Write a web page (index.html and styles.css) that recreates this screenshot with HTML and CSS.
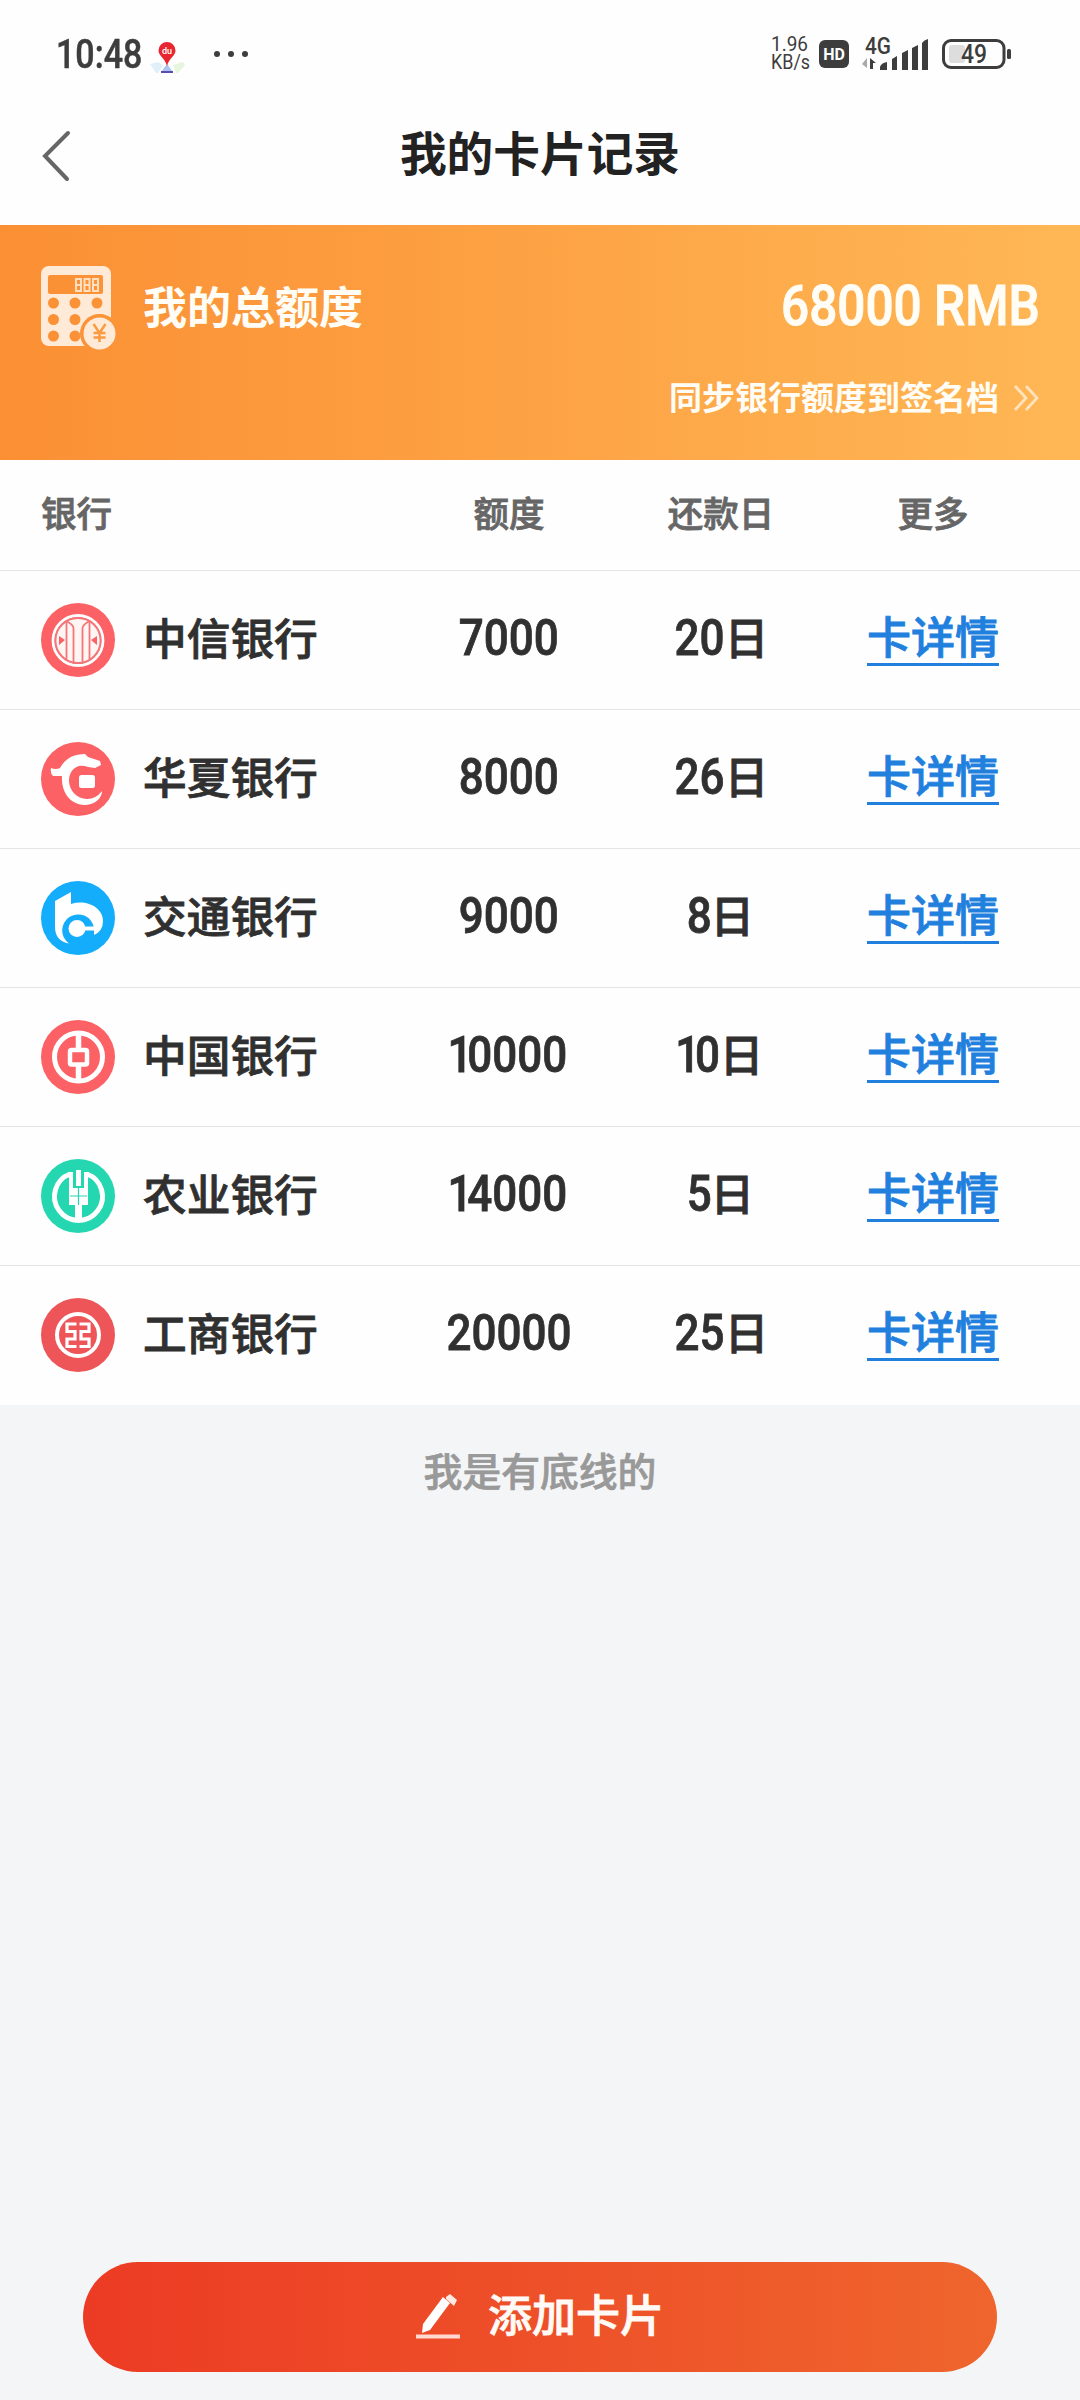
FILE: index.html
```html
<!DOCTYPE html>
<html lang="zh-CN">
<head>
<meta charset="utf-8">
<title>我的卡片记录</title>
<link rel="stylesheet" href="styles.css">
</head>
<body>
<div class="screen">
  <div class="status">
    <span class="clock"><span>10:48</span></span>
    <svg class="pin" width="38" height="40" viewBox="0 0 38 40">
      <path d="M2 28l8-2 5 3-5 8H8z" fill="#dff0fb"/><path d="M25 29l10-3 2 3-7 8h-2z" fill="#e6f5dd"/>
      <path d="M19 28l6 8H13z" fill="#a9c6ee"/><path d="M13 35h12v2H13z" fill="#5a4bb0"/>
      <path d="M19 30C17 22 10.500 20 10.500 14.500a8.500 8.500 0 0 1 17 0C27.500 20 21 22 19 30z" fill="#e8262f"/>
      <text x="19" y="18" text-anchor="middle" class="pin-text">du</text>
    </svg>
    <span class="dots"><i></i><i></i><i></i></span>
    <svg class="speed" width="42" height="40" viewBox="0 0 42 40">
      <text x="1" y="17" textLength="37" lengthAdjust="spacingAndGlyphs">1.96</text>
      <text x="1" y="35" textLength="39" lengthAdjust="spacingAndGlyphs">KB/s</text>
    </svg>
    <span class="hd">HD</span>
    <svg class="signal" width="68" height="40" viewBox="0 0 68 40">
      <text x="4" y="20" class="sig-text" textLength="26" lengthAdjust="spacingAndGlyphs">4G</text>
      <path d="M6 24v10L1 30" fill="#aaa"/><path d="M9 35V24l6 5h-3v6z" fill="#3d3d3d"/>
      <path d="M19 36v-3q1-4 7-5v8zM31 36V25l5-3v14zM41 36V19l6-3v20zM51 36V14l6-3v25zM61 36V9q2-3 6-4v31z" fill="#3d3d3d"/>
    </svg>
    <svg class="battery" width="70" height="32" viewBox="0 0 70 32">
      <rect x="7" y="7" width="16" height="18" rx="3" fill="#ddd"/>
      <rect x="1.500" y="2.500" width="60.500" height="27" rx="7.500" fill="none" stroke="#3d3d3d" stroke-width="3"/>
      <rect x="65" y="11" width="4" height="10" rx="1.500" fill="#3d3d3d"/>
      <text x="19" y="24.500" class="bat-text" textLength="26" lengthAdjust="spacingAndGlyphs">49</text>
    </svg>
  </div>

  <header class="nav">
    <svg class="back" width="30" height="52" viewBox="0 0 30 52"><path d="M27 3L4 26l22 23" fill="none" stroke="#666" stroke-width="4" stroke-linecap="round"/></svg>
    <h1>我的卡片记录</h1>
  </header>

  <section class="total">
    <div class="total-main">
      <svg class="calc" width="75" height="86" viewBox="0 0 75 86">
        <defs><mask id="cut"><rect width="75" height="86" fill="#fff"/><rect x="7" y="9" width="55" height="19" rx="2" fill="#000"/><circle cx="12.500" cy="37" r="5.500" fill="#000"/><circle cx="34" cy="37" r="5.500" fill="#000"/><circle cx="56" cy="37" r="5.500" fill="#000"/><circle cx="12.500" cy="53.500" r="5.500" fill="#000"/><circle cx="34" cy="53.500" r="5.500" fill="#000"/><circle cx="12.500" cy="70" r="5.500" fill="#000"/><circle cx="34" cy="70" r="5.500" fill="#000"/><circle cx="58.500" cy="67.500" r="19.500" fill="#000"/></mask></defs>
        <rect width="70" height="80" rx="8" fill="#ffead8" mask="url(#cut)"/>
        <circle cx="58.500" cy="67.500" r="16" fill="#ffead8"/>
        <path d="M52.500 58l6 9 6-9M58.500 67v9M52.500 67h12M52.500 71.500h12" fill="none" stroke="#fb9a3e" stroke-width="2.400"/>
        <path d="M35 13h5v12h-5zM35 19h5M43.500 13h5v12h-5zM43.500 19h5M52 13h5v12h-5zM52 19h5" fill="none" stroke="#ffdfc0" stroke-width="2"/>
      </svg>
      <span class="total-label">我的总额度</span>
      <span class="total-value"><span>68000 RMB</span></span>
    </div>
    <div class="sync"><span>同步银行额度到签名档</span>
      <svg width="26" height="28" viewBox="0 0 26 28"><path d="M2 2l11 12L2 26M13 2l11 12-11 12" fill="none" stroke="#ffe3bd" stroke-width="2.800"/></svg>
    </div>
  </section>

  <main class="table">
    <div class="row head"><span>银行</span><span>额度</span><span>还款日</span><span>更多</span></div>
    <div class="row">
      <span class="bank"><svg viewBox="0 0 74 74"><circle cx="37" cy="37" r="37" fill="#fc6165"/><circle cx="37" cy="37.500" r="25" fill="none" stroke="#fff" stroke-width="2.800"/><circle cx="37" cy="37.500" r="22.500" fill="#fff5f3"/><path d="M18 33l6 4-6 5zM56 33l-6 4 6 5z" fill="#fc6165"/><g fill="none" stroke="#f3777a" stroke-width="1.800"><circle cx="37" cy="37.500" r="22.500"/><path d="M25.500 18v39M48.500 18v39M32.500 60V25q0-3-7-7M41.500 60V25q0-3 7-7"/></g></svg><span>中信银行</span></span>
      <span class="num"><b>7000</b></span><span class="num"><b>20</b>日</span><span><a>卡详情</a></span>
    </div>
    <div class="row">
      <span class="bank"><svg viewBox="0 0 74 74"><circle cx="37" cy="37" r="37" fill="#fc6165"/><path d="M10 26Q15 28 19 26C24 17 32 12 44 12L47 15 53 17 59 19 60 23 54 26 47 25Q42 23 38 24C31 26 28 32 28 39 28 48 36 57 46 57Q55 57 61 49C61 57 53 63 43 63 29 62 20 50 21 34L12 34Q9 31 10 26z" fill="#fff"/><rect x="38" y="33" width="16" height="13" rx="2.500" fill="#fff"/></svg><span>华夏银行</span></span>
      <span class="num"><b>8000</b></span><span class="num"><b>26</b>日</span><span><a>卡详情</a></span>
    </div>
    <div class="row">
      <span class="bank"><svg viewBox="0 0 74 74"><circle cx="37" cy="37" r="37" fill="#14adfb"/><path d="M14 20L30 11V23C46 18 62 27 62 40Q62 50 53 54V47A16 16 0 1 0 28 62.500Q14 60 14 46z" fill="#fff"/><circle cx="36" cy="47.500" r="8.500" fill="#fff"/><path d="M40 45.500h13v4H40z" fill="#fff"/></svg><span>交通银行</span></span>
      <span class="num"><b>9000</b></span><span class="num"><b>8</b>日</span><span><a>卡详情</a></span>
    </div>
    <div class="row">
      <span class="bank"><svg viewBox="0 0 74 74"><circle cx="37" cy="37" r="37" fill="#fc6165"/><g fill="none" stroke="#fff"><circle cx="37.500" cy="37" r="24" stroke-width="5"/><rect x="29" y="30" width="17" height="14.500" rx="1.500" stroke-width="4.500"/><path d="M37.500 13v17M37.500 45v17" stroke-width="5.500"/></g></svg><span>中国银行</span></span>
      <span class="num"><b><i>1</i>0000</b></span><span class="num"><b><i>1</i>0</b>日</span><span><a>卡详情</a></span>
    </div>
    <div class="row">
      <span class="bank"><svg viewBox="0 0 74 74"><circle cx="37" cy="37" r="37" fill="#25d7b0"/><path d="M29 15a24 24 0 1 0 17 0" fill="none" stroke="#fff" stroke-width="5"/><path d="M28 13h4v16h11V13h4v33h-6v16h-7V46h-6z" fill="#fff"/><path d="M35 11h5v16h-5z" fill="#fff"/><path d="M37.500 29v17M29 37h17" stroke="#25d7b0" stroke-width="1.200"/></svg><span>农业银行</span></span>
      <span class="num"><b><i>1</i>4000</b></span><span class="num"><b>5</b>日</span><span><a>卡详情</a></span>
    </div>
    <div class="row">
      <span class="bank"><svg viewBox="0 0 74 74"><circle cx="37" cy="37" r="37" fill="#ed5559"/><g fill="none" stroke="#fff"><circle cx="37" cy="37" r="21" stroke-width="4"/><path d="M35.500 26H26V33.500H34V41H26V48.500H35.500M38.500 26H48V33.500H40V41H48V48.500H38.500" stroke-width="3.200"/></g></svg><span>工商银行</span></span>
      <span class="num"><b>20000</b></span><span class="num"><b>25</b>日</span><span><a>卡详情</a></span>
    </div>
  </main>

  <p class="end">我是有底线的</p>

  <footer class="foot">
    <button class="add">
      <svg width="44" height="44" viewBox="0 0 44 44"><path d="M6 38l1-9L27 2l7 6-20 27z" fill="#fff"/><path d="M30 2l4-3 7 6-3 6-8-7z" fill="#ffe9e2"/><path d="M0 39.500h44v4H0z" fill="#ffd9cf"/></svg>
      <span>添加卡片</span>
    </button>
  </footer>
</div>
</body>
</html>
```
FILE: styles.css
```css
* { box-sizing: border-box; }
body { margin: 0; font-family: "Noto Sans CJK SC", sans-serif; font-weight: 500; color: #303030; }
.screen { width: 1080px; height: 2400px; display: flex; flex-direction: column; background: #f4f5f7; }

.status { height: 107px; padding: 0 68px 0 56px; display: flex; align-items: center; background: #fefefe; font-family: Roboto, sans-serif; color: #3d3d3d; }
.clock { width: 86px; font-size: 41px; white-space: nowrap; }
.clock span { display: inline-block; transform: scaleX(.83); transform-origin: left; -webkit-text-stroke: .5px; }
.pin { margin-left: 6px; margin-top: 4px; }
.pin-text { font: 500 9px Roboto, sans-serif; fill: #fff; }
.dots { display: flex; gap: 8px; margin-left: 28px; }
.dots i { width: 6px; height: 6px; border-radius: 50%; background: #3d3d3d; }
.speed { margin-left: auto; font: 400 21px Roboto, sans-serif; fill: #3d3d3d; }
.hd { width: 30px; height: 28px; margin-left: 7px; border-radius: 6px; background: #3d3d3d; color: #fff; font: 700 16px/29px Roboto, sans-serif; text-align: center; }
.signal { margin-left: 12px; }
.battery { margin-left: 13px; }
.sig-text { font: 500 23px Roboto, sans-serif; fill: #3d3d3d; }
.bat-text { font: 500 25px Roboto, sans-serif; fill: #3d3d3d; }

.nav { height: 118px; padding: 0 41px; display: grid; grid-template-columns: 30px 1fr 30px; align-items: center; background: #fefefe; }
.back { margin-top: -20px; }
.nav h1 { margin: 0; padding-bottom: 30px; font-size: 46.700px; line-height: 60px; font-weight: 700; color: #222; text-align: center; }

.total { height: 235px; padding: 41px 41px 0; background: linear-gradient(90deg, #fb8f34, #ffb755); color: #fffdf5; }
.total-main { display: flex; align-items: flex-start; height: 86px; }
.total-label { margin-left: 27px; padding-top: 6px; font-size: 44px; line-height: 66px; font-weight: 700; }
.total-value { margin-left: auto; width: 258px; padding-top: 7px; font: 500 55px/66px Roboto, sans-serif; white-space: nowrap; -webkit-text-stroke: 1px; }
.total-value span { display: inline-block; transform: scaleX(.9); transform-origin: left; }
.sync { display: flex; justify-content: flex-end; align-items: center; gap: 14px; margin-top: 10px; height: 80px; padding-bottom: 8px; font-size: 33px; line-height: 40px; font-weight: 700; }
.sync span { padding-bottom: 4px; }

.table { background: #fefefe; -webkit-text-stroke: .8px; }
.row { display: grid; grid-template-columns: 362px repeat(3, 212px); align-items: center; height: 139px; padding: 0 41px; border-bottom: 1px solid #e4e4e4; font-size: 44px; line-height: 64px; text-align: center; }
.row:last-child { border-bottom-color: transparent; }
.head { height: 111px; padding-bottom: 6px; font-size: 35.500px; color: #666; }
.head span:first-child { text-align: left; }
.bank { display: flex; align-items: center; gap: 28px; white-space: nowrap; }
.bank svg { width: 74px; height: 74px; flex: none; }
.bank span { padding-bottom: 9px; font-size: 43.700px; }
.num { display: flex; justify-content: center; align-items: center; padding-bottom: 9px; }
.num b { position: relative; top: 2px; font: 500 50px/64px Roboto, sans-serif; transform: scaleX(.88); margin: 0 -3px; }
.num i { font-style: normal; margin: 0 -6px 0 -4px; }
.row a { display: inline-block; height: 58px; margin-bottom: 11px; line-height: 54px; color: #217fde; border-bottom: 3px solid #217fde; }

.end { margin: 36px 0 0; font-size: 38.800px; line-height: 56px; text-align: center; color: #999; -webkit-text-stroke: .7px; }
.foot { margin-top: auto; padding: 0 83px 28px; }
.add { width: 914px; height: 110px; padding: 0; border: 0; border-radius: 55px; display: flex; align-items: center; justify-content: center; gap: 28px; background: linear-gradient(90deg, #ec3b24, #ef652d); color: #fffaf5; font: 500 44px/60px "Noto Sans CJK SC", sans-serif; -webkit-text-stroke: .8px; }
.add svg { overflow: visible; }
.add span { padding-bottom: 9px; }
```
